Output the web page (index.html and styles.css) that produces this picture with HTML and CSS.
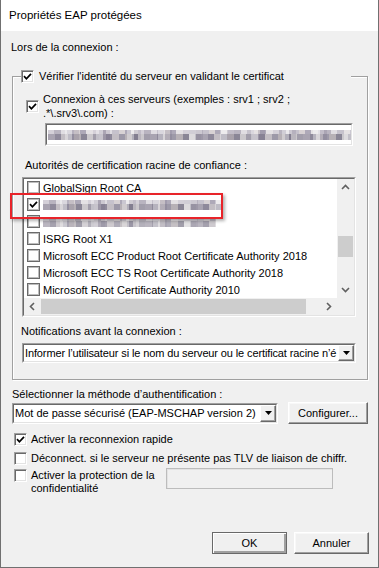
FILE: index.html
```html
<!DOCTYPE html>
<html lang="fr">
<head>
    <meta charset="UTF-8">
    <meta name="viewport" content="width=device-width, initial-scale=1.0">
    <title>Propriétés EAP protégées</title>
    <link rel="stylesheet" href="styles.css">
</head>
<body>
    <div class="window">
        <div class="title-bar">Propriétés EAP protégées</div>

        <div class="dialog">
            <div class="label">Lors de la connexion :</div>

            <fieldset class="group">
                <legend class="group-legend">
                    <span class="check sunken"><svg class="tick" viewBox="0 0 9 9"><path d="M1 4.2 L3.4 6.8 L8 1.8"/></svg></span>
                    <span>Vérifier l'identité du serveur en validant le certificat</span>
                </legend>

                <div class="servers-row">
                    <span class="check sunken"><svg class="tick" viewBox="0 0 9 9"><path d="M1 4.2 L3.4 6.8 L8 1.8"/></svg></span>
                    <span class="servers-text">Connexion à ces serveurs (exemples : srv1 ; srv2 ;<br>.*\.srv3\.com) :</span>
                </div>

                <div class="field servers-box">
                    <div class="field-inner"><span class="blur blur-field"></span></div>
                </div>

                <div class="label ca-label">Autorités de certification racine de confiance :</div>

                <div class="listbox">
                    <div class="list-inner">
                        <div class="list-main">
                            <div class="list-rows">
                                <div class="list-item"><span class="check flat"></span>GlobalSign Root CA</div>
                                <div class="list-item"><span class="check flat"><svg class="tick" viewBox="0 0 9 9"><path d="M1 4.2 L3.4 6.8 L8 1.8"/></svg></span><span class="blur blur-item"></span></div>
                                <div class="list-item"><span class="check flat"></span><span class="blur blur-item faded"></span></div>
                                <div class="list-item"><span class="check flat"></span>ISRG Root X1</div>
                                <div class="list-item"><span class="check flat"></span>Microsoft ECC Product Root Certificate Authority 2018</div>
                                <div class="list-item"><span class="check flat"></span>Microsoft ECC TS Root Certificate Authority 2018</div>
                                <div class="list-item"><span class="check flat"></span>Microsoft Root Certificate Authority 2010</div>
                            </div>
                            <div class="vscroll">
                                <span class="sb-btn"><svg viewBox="0 0 17 17"><path d="M5 10 L8.5 6.5 L12 10"/></svg></span>
                                <span class="sb-track"><span class="sb-thumb vthumb"></span></span>
                                <span class="sb-btn"><svg viewBox="0 0 17 17"><path d="M5 7 L8.5 10.5 L12 7"/></svg></span>
                            </div>
                        </div>
                        <div class="hscroll">
                            <span class="sb-btn"><svg viewBox="0 0 17 17"><path d="M10 5 L6.5 8.5 L10 12"/></svg></span>
                            <span class="sb-track htrack"><span class="sb-thumb hthumb"></span></span>
                            <span class="sb-btn"><svg viewBox="0 0 17 17"><path d="M7 5 L10.5 8.5 L7 12"/></svg></span>
                            <span class="sb-corner"></span>
                        </div>
                    </div>
                    <div class="highlight"></div>
                </div>

                <div class="label notif-label">Notifications avant la connexion :</div>

                <div class="field combo notif-combo">
                    <div class="field-inner">
                        <span class="combo-text notif-text">Informer l’utilisateur si le nom du serveur ou le certificat racine n’é</span>
                        <span class="combo-btn"><svg viewBox="0 0 7 4"><path d="M0 0 H7 L3.5 4 Z"/></svg></span>
                    </div>
                </div>
            </fieldset>

            <div class="label method-label">Sélectionner la méthode d’authentification :</div>

            <div class="method-row">
                <div class="field combo method-combo">
                    <div class="field-inner">
                        <span class="combo-text">Mot de passe sécurisé (EAP-MSCHAP version 2)</span>
                        <span class="combo-btn"><svg viewBox="0 0 7 4"><path d="M0 0 H7 L3.5 4 Z"/></svg></span>
                    </div>
                </div>
                <button class="btn configure-btn">Configurer...</button>
            </div>

            <div class="option first-option">
                <span class="check sunken"><svg class="tick" viewBox="0 0 9 9"><path d="M1 4.2 L3.4 6.8 L8 1.8"/></svg></span>
                <span>Activer la reconnexion rapide</span>
            </div>
            <div class="option">
                <span class="check sunken"></span>
                <span>Déconnect. si le serveur ne présente pas TLV de liaison de chiffr.</span>
            </div>
            <div class="option privacy-option">
                <span class="check sunken"></span>
                <span class="privacy-text">Activer la protection de la<br>confidentialité</span>
                <span class="disabled-box"></span>
            </div>

            <div class="footer">
                <button class="btn default-btn">OK</button>
                <button class="btn">Annuler</button>
            </div>
        </div>
    </div>
</body>
</html>
```

FILE: styles.css
```css
body {
    margin: 0;
    font-family: 'Liberation Sans', Arial, sans-serif;
    font-size: 11px;
    color: #000;
    background: #f0f0f0;
}

.window {
    width: 379px;
    height: 568px;
    box-sizing: border-box;
    border: 1px solid #707070;
    border-top: none;
    display: flex;
    flex-direction: column;
    overflow: hidden;
}

.title-bar {
    height: 31px;
    line-height: 31px;
    padding-left: 8px;
    background: #fff;
    font-size: 11.5px;
    flex-shrink: 0;
}

.dialog {
    flex: 1;
    background: #f0f0f0;
    padding: 10px 10px 13px 10px;
    display: flex;
    flex-direction: column;
}

.label {
    line-height: 13px;
    white-space: nowrap;
}

/* group box */
.group {
    margin: 16px 0 0 1px;
    padding: 0 0 16px 0;
    min-width: 0;
    border: 1px solid #a0a0a0;
    box-shadow: 1px 1px 0 #fff, inset 1px 1px 0 #fff;
}

.group-legend {
    margin-left: 8px;
    padding: 0;
    width: 330px;
    height: 13px;
    display: flex;
    align-items: center;
    gap: 5px;
    background: #f0f0f0;
    line-height: 13px;
}

/* checkboxes */
.check {
    width: 13px;
    height: 13px;
    box-sizing: border-box;
    flex-shrink: 0;
    display: inline-flex;
    align-items: center;
    justify-content: center;
    background: #fff;
}

.check.sunken {
    border: 1px solid;
    border-color: #a0a0a0 #fff #fff #a0a0a0;
    box-shadow: inset 1px 1px 0 #696969, inset -1px -1px 0 #e3e3e3;
}

.check.flat {
    border: 1px solid #6a6a6a;
    box-shadow: inset 0 0 0 1px #bdbdbd;
}

.tick {
    width: 9px;
    height: 9px;
}

.tick path {
    fill: none;
    stroke: #000;
    stroke-width: 1.7;
}

.servers-row {
    margin: 9px 0 0 13px;
    display: flex;
    align-items: center;
    gap: 4px;
}

.servers-text {
    line-height: 14px;
}

/* sunken fields */
.field {
    box-sizing: border-box;
    border: 1px solid;
    border-color: #a0a0a0 #fff #fff #a0a0a0;
}

.field-inner {
    height: 100%;
    box-sizing: border-box;
    border: 1px solid;
    border-color: #696969 #e3e3e3 #e3e3e3 #696969;
    background: #fff;
    display: flex;
    align-items: center;
}

.servers-box {
    margin: 3px 0 0 32px;
    width: 308px;
    height: 23px;
}

.servers-box .field-inner {
    padding-left: 1px;
}

/* pixelated (blurred) content: two rows of grey blocks */
.blur {
    display: block;
    height: 10px;
    background:
        repeating-linear-gradient(90deg, transparent 0 17px, rgba(255,255,255,0.35) 17px 24px, rgba(90,80,110,0.15) 24px 31px) 0 0 / 100% 10px no-repeat,
        repeating-linear-gradient(90deg, #d4d0d8 0 6px, #b9b4c0 6px 13px, #e0dde2 13px 19px, #c6c2cc 19px 26px, #d8d2d4 26px 32px, #aea9b8 32px 38px, #e4e1e4 38px 45px) 0 0 / 100% 4px no-repeat,
        repeating-linear-gradient(90deg, #a9a4b1 0 7px, #8f8a9b 7px 13px, #c3bec4 13px 20px, #9d99a8 20px 26px, #b7b1b6 26px 33px, #8a8696 33px 39px, #cbc8cc 39px 45px, #a29eab 45px 51px) 0 4px / 100% 6px no-repeat;
}

.blur-field {
    width: 304px;
}

.blur-item {
    width: 178px;
}

.blur-item.faded {
    width: 173px;
    opacity: 0.8;
}

.ca-label {
    margin: 13px 0 0 12px;
}

/* list box */
.listbox {
    position: relative;
    margin: 5px 0 0 9px;
    width: 334px;
    height: 140px;
    box-sizing: border-box;
    border: 1px solid;
    border-color: #a0a0a0 #fff #fff #a0a0a0;
}

.list-inner {
    height: 100%;
    box-sizing: border-box;
    border: 1px solid;
    border-color: #696969 #e3e3e3 #e3e3e3 #696969;
    display: flex;
    flex-direction: column;
}

.list-main {
    height: 119px;
    display: flex;
}

.list-rows {
    flex: 1;
    background: #fff;
    overflow: hidden;
}

.list-item {
    height: 17px;
    display: flex;
    align-items: center;
    gap: 3px;
    padding-left: 3px;
    white-space: nowrap;
}

.vscroll {
    width: 17px;
    display: flex;
    flex-direction: column;
    background: #f0f0f0;
}

.hscroll {
    height: 17px;
    display: flex;
    background: #f0f0f0;
}

.sb-btn {
    width: 17px;
    height: 17px;
    flex-shrink: 0;
    display: block;
}

.sb-btn svg {
    width: 17px;
    height: 17px;
    display: block;
}

.sb-btn path {
    fill: none;
    stroke: #606060;
    stroke-width: 1.6;
}

.sb-track {
    flex: 1;
    position: relative;
    display: block;
}

.sb-thumb {
    display: block;
    background: #cdcdcd;
}

.vthumb {
    margin: 40px 1px 0 1px;
    height: 21px;
}

.htrack {
    display: flex;
}

.hthumb {
    margin: 1px 0;
    width: 265px;
}

.sb-corner {
    width: 17px;
    flex-shrink: 0;
}

.highlight {
    position: absolute;
    left: -13px;
    top: 15px;
    width: 213px;
    height: 26px;
    box-sizing: border-box;
    border: 2px solid #e8242a;
    box-shadow: 2px 2px 3px rgba(0,0,0,0.3);
}

.notif-label {
    margin: 8px 0 0 8px;
}

/* combo boxes */
.combo .field-inner {
    padding-left: 1px;
}

.combo-text {
    flex: 1;
    min-width: 0;
    overflow: hidden;
    white-space: nowrap;
    line-height: 13px;
}

.notif-text {
    letter-spacing: -0.12px;
}

.combo-btn {
    width: 16px;
    height: 100%;
    box-sizing: border-box;
    flex-shrink: 0;
    border: 1px solid;
    border-color: #fff #696969 #696969 #fff;
    box-shadow: inset -1px -1px 0 #a0a0a0;
    background: #f0f0f0;
    display: flex;
    align-items: center;
    justify-content: center;
}

.combo-btn svg {
    width: 7px;
    height: 4px;
}

.notif-combo {
    margin: 5px 0 0 9px;
    width: 334px;
    height: 20px;
}

.method-label {
    margin: 8px 0 0 1px;
}

.method-row {
    margin-top: 1px;
    display: flex;
    align-items: center;
}

.method-combo {
    margin-left: 1px;
    width: 266px;
    height: 21px;
}

/* buttons */
.btn {
    font-family: inherit;
    font-size: 11px;
    color: #000;
    height: 22px;
    padding: 0;
    background: #f0f0f0;
    box-sizing: border-box;
    border: 1px solid;
    border-color: #fff #696969 #696969 #fff;
    box-shadow: inset -1px -1px 0 #a0a0a0, inset 1px 1px 0 #f8f8f8;
    width: 75px;
}

.configure-btn {
    margin-left: auto;
    width: 80px;
}

.default-btn {
    border-color: #696969;
    box-shadow: inset 1px 1px 0 #fff, inset -2px -2px 0 #a0a0a0;
}

/* options */
.option {
    margin: 6px 0 0 3px;
    display: flex;
    align-items: center;
    gap: 4px;
    line-height: 13px;
    white-space: nowrap;
}

.first-option {
    margin-top: 9px;
}

.privacy-option {
    margin-top: 4px;
    align-items: flex-start;
}

.privacy-text {
    width: 131px;
}

.disabled-box {
    margin-top: -1px;
    width: 167px;
    height: 21px;
    box-sizing: border-box;
    border: 1px solid #bcbcbc;
    box-shadow: inset 1px 1px 0 #e3e3e3;
    background: #f0f0f0;
}

.footer {
    margin-top: auto;
    margin-right: -1px;
    display: flex;
    justify-content: flex-end;
    gap: 7px;
}
```
